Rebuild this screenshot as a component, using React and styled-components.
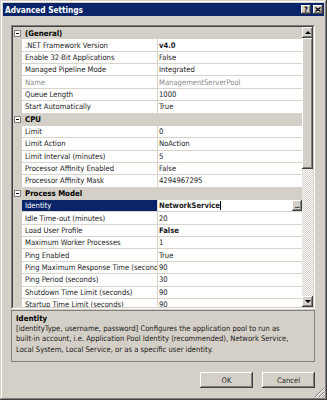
import React from "react";
import styled, { createGlobalStyle } from "styled-components";

const GlobalStyle = createGlobalStyle`
  html, body {
    margin: 0;
    padding: 0;
    background: #d4d0c8;
  }
  body {
    width: 327px;
    height: 400px;
    overflow: hidden;
  }
`;

const uiFont = `"DejaVu Sans Condensed", "DejaVu Sans", "Liberation Sans", sans-serif`;

const raised = `
  box-shadow: inset -1px -1px 0 #404040, inset 1px 1px 0 #ffffff,
    inset -2px -2px 0 #808080;
`;

const sections = [
  {
    title: "(General)",
    items: [
      { label: ".NET Framework Version", value: "v4.0", bold: true },
      { label: "Enable 32-Bit Applications", value: "False" },
      { label: "Managed Pipeline Mode", value: "Integrated" },
      { label: "Name", value: "ManagementServerPool", dim: true },
      { label: "Queue Length", value: "1000" },
      { label: "Start Automatically", value: "True" },
    ],
  },
  {
    title: "CPU",
    items: [
      { label: "Limit", value: "0" },
      { label: "Limit Action", value: "NoAction" },
      { label: "Limit Interval (minutes)", value: "5" },
      { label: "Processor Affinity Enabled", value: "False" },
      { label: "Processor Affinity Mask", value: "4294967295" },
    ],
  },
  {
    title: "Process Model",
    items: [
      { label: "Identity", value: "NetworkService", bold: true, selected: true },
      { label: "Idle Time-out (minutes)", value: "20" },
      { label: "Load User Profile", value: "False", bold: true },
      { label: "Maximum Worker Processes", value: "1" },
      { label: "Ping Enabled", value: "True" },
      { label: "Ping Maximum Response Time (seconds)", value: "90" },
      { label: "Ping Period (seconds)", value: "30" },
      { label: "Shutdown Time Limit (seconds)", value: "90" },
      { label: "Startup Time Limit (seconds)", value: "90" },
    ],
  },
];

const App = () => {
  return (
    <>
      <GlobalStyle />
      <Window>
        <TitleBar>
          <TitleText>Advanced Settings</TitleText>
          <CaptionButton>?</CaptionButton>
          <CaptionButton $gap>
            <svg width="6" height="5" viewBox="0 0 6 5">
              <path d="M0.5 0.5 L5.5 4.5 M5.5 0.5 L0.5 4.5" stroke="#000" strokeWidth="1.3" />
            </svg>
          </CaptionButton>
        </TitleBar>

        <Body>
          <Grid>
            <GridInner>
              <List>
                {sections.map((section) => (
                  <React.Fragment key={section.title}>
                    <CategoryRow>
                      <Expander>
                        <span />
                      </Expander>
                      <CategoryTitle>{section.title}</CategoryTitle>
                    </CategoryRow>
                    {section.items.map((item) => (
                      <ItemRow key={item.label}>
                        <Gutter />
                        <LabelCell $selected={item.selected} $dim={item.dim}>
                          {item.label}
                        </LabelCell>
                        <ValueCell $bold={item.bold} $dim={item.dim}>
                          {item.value}
                          {item.selected && (
                            <>
                              <Caret />
                              <EllipsisButton>...</EllipsisButton>
                            </>
                          )}
                        </ValueCell>
                      </ItemRow>
                    ))}
                  </React.Fragment>
                ))}
              </List>
              <Scrollbar>
                <ScrollButton>
                  <Arrow $up />
                </ScrollButton>
                <Thumb />
                <Track />
                <ScrollButton>
                  <Arrow />
                </ScrollButton>
              </Scrollbar>
            </GridInner>
          </Grid>

          <Description>
            <DescTitle>Identity</DescTitle>
            <DescText>
              [identityType, username, password] Configures the application pool to run as
              <br />
              built-in account, i.e. Application Pool Identity (recommended), Network Service,
              <br />
              Local System, Local Service, or as a specific user identity.
            </DescText>
          </Description>

          <ButtonRow>
            <DialogButton>OK</DialogButton>
            <DialogButton>Cancel</DialogButton>
          </ButtonRow>
        </Body>

        <Grip>
          <svg width="11" height="11" viewBox="0 0 11 11">
            <path d="M10 1 L1 10 M10 5 L5 10 M10 9 L9 10" stroke="#808080" strokeWidth="1" />
            <path d="M10 2 L2 10 M10 6 L6 10" stroke="#ffffff" strokeWidth="1" />
          </svg>
        </Grip>
      </Window>
    </>
  );
};

export default App;

const Window = styled.div`
  box-sizing: border-box;
  position: relative;
  width: 327px;
  height: 400px;
  padding: 3px;
  background: #d4d0c8;
  box-shadow: inset -1px -1px 0 #404040, inset 1px 1px 0 #d4d0c8,
    inset -2px -2px 0 #808080, inset 2px 2px 0 #ffffff;
  display: flex;
  flex-direction: column;
  font-family: ${uiFont};
  font-size: 7.6px;
  color: #1a1a1a;
`;

const TitleBar = styled.div`
  height: 13px;
  flex: none;
  display: flex;
  align-items: center;
  padding: 0 1px 0 1px;
  background: #0a246a;
  color: #ffffff;
  font-weight: bold;
  font-size: 8.2px;
`;

const TitleText = styled.span`
  flex: 1;
  padding-left: 1px;
`;

const CaptionButton = styled.div`
  width: 10px;
  height: 9px;
  margin-left: ${(p) => (p.$gap ? "2px" : "0")};
  display: flex;
  align-items: center;
  justify-content: center;
  background: #d4d0c8;
  ${raised}
  color: #000;
  font-size: 7.5px;
  font-weight: bold;
`;

const Body = styled.div`
  flex: 1;
  display: flex;
  flex-direction: column;
  padding: 9px 9px 0 8px;
`;

const Grid = styled.div`
  height: 284px;
  flex: none;
  box-sizing: border-box;
  border: 1px solid;
  border-color: #808080 #ffffff #ffffff #808080;
`;

const GridInner = styled.div`
  box-sizing: border-box;
  height: 100%;
  display: flex;
  border: 1px solid;
  border-color: #404040 #d4d0c8 #d4d0c8 #404040;
  background: #ffffff;
`;

const List = styled.div`
  flex: 1;
  overflow: hidden;
`;

const CategoryRow = styled.div`
  height: 12.36px;
  display: flex;
  align-items: center;
  background: #d4d0c8;
`;

const Expander = styled.span`
  width: 9px;
  flex: none;
  display: flex;
  justify-content: center;
  span {
    box-sizing: border-box;
    width: 7px;
    height: 7px;
    border: 1px solid #808080;
    background: linear-gradient(#000, #000) center / 3px 1px no-repeat #fff;
  }
`;

const CategoryTitle = styled.span`
  padding-left: 3px;
  font-weight: bold;
  font-size: 7.8px;
  color: #000;
`;

const ItemRow = styled.div`
  height: 12.36px;
  display: grid;
  grid-template-columns: 9px 136px 1fr;
`;

const Gutter = styled.div`
  background: #d4d0c8;
`;

const cell = `
  box-sizing: border-box;
  display: flex;
  align-items: center;
  white-space: nowrap;
  overflow: hidden;
  border-bottom: 1px solid #d8d4cc;
`;

const LabelCell = styled.div`
  ${cell}
  padding-left: 3px;
  border-right: 1px solid #d8d4cc;
  background: ${(p) => (p.$selected ? "#0a246a" : "#ffffff")};
  color: ${(p) => (p.$selected ? "#ffffff" : p.$dim ? "#8a8a8a" : "#1a1a1a")};
`;

const ValueCell = styled.div`
  ${cell}
  position: relative;
  padding-left: 1px;
  font-weight: ${(p) => (p.$bold ? "bold" : "normal")};
  color: ${(p) => (p.$dim ? "#8a8a8a" : "#1a1a1a")};
`;

const Caret = styled.span`
  width: 1px;
  height: 9px;
  background: #000;
`;

const EllipsisButton = styled.span`
  position: absolute;
  right: 0;
  top: 0;
  width: 10px;
  height: 11px;
  box-sizing: border-box;
  display: flex;
  align-items: flex-end;
  justify-content: center;
  padding-bottom: 2px;
  background: #d4d0c8;
  ${raised}
  color: #000;
  font-weight: bold;
  font-size: 6px;
  line-height: 6px;
  letter-spacing: -0.5px;
`;

const Scrollbar = styled.div`
  width: 11px;
  flex: none;
  display: flex;
  flex-direction: column;
`;

const ScrollButton = styled.div`
  height: 11px;
  flex: none;
  display: flex;
  align-items: center;
  justify-content: center;
  background: #d4d0c8;
  ${raised}
`;

const Arrow = styled.span`
  width: 0;
  height: 0;
  border-left: 3px solid transparent;
  border-right: 3px solid transparent;
  ${(p) =>
    p.$up ? "border-bottom: 3px solid #000;" : "border-top: 3px solid #000;"}
`;

const Thumb = styled.div`
  height: 131px;
  flex: none;
  background: #d4d0c8;
  ${raised}
`;

const Track = styled.div`
  flex: 1;
  background: repeating-conic-gradient(#ffffff 0 25%, #d4d0c8 0 50%) 0 0 / 2px 2px;
`;

const Description = styled.div`
  box-sizing: border-box;
  height: 52px;
  flex: none;
  margin-top: 1px;
  padding: 2px 4px;
  border: 1px solid #808080;
  color: #1a1a1a;
`;

const DescTitle = styled.div`
  font-weight: bold;
  font-size: 7.8px;
  line-height: 11px;
  color: #000;
`;

const DescText = styled.div`
  line-height: 10.4px;
  white-space: nowrap;
`;

const ButtonRow = styled.div`
  display: flex;
  justify-content: flex-end;
  gap: 9px;
  margin-top: 10px;
`;

const DialogButton = styled.div`
  width: 53px;
  height: 16px;
  display: flex;
  align-items: center;
  justify-content: center;
  background: #d4d0c8;
  box-shadow: inset -1px -1px 0 #404040, inset 1px 1px 0 #ffffff,
    inset -2px -2px 0 #808080;
  color: #222;
`;

const Grip = styled.div`
  position: absolute;
  right: 2px;
  bottom: 2px;
  width: 11px;
  height: 11px;
  svg {
    display: block;
  }
`;
